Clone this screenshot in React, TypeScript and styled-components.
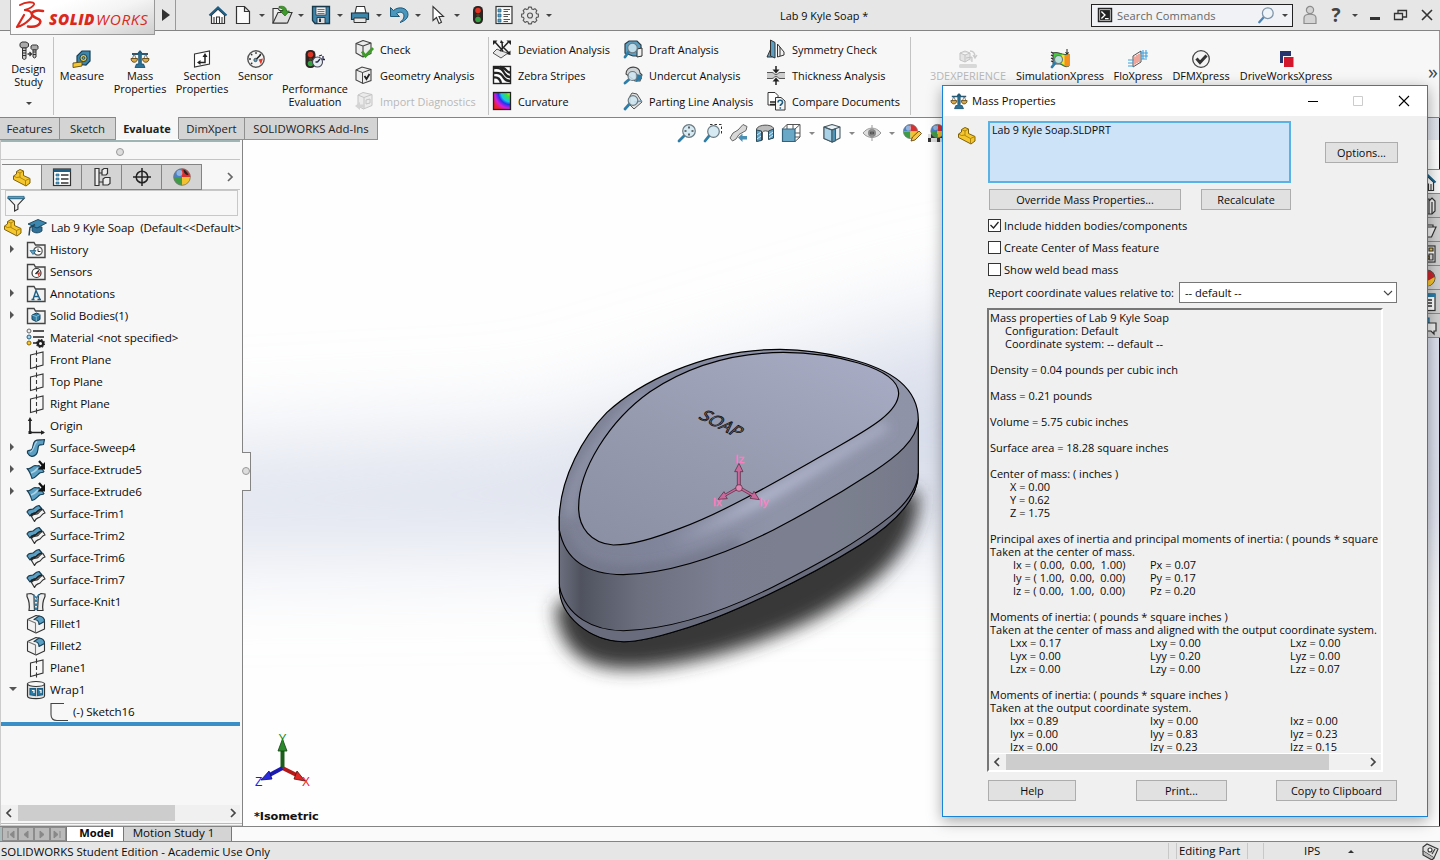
import React from 'react';
import styled, { createGlobalStyle, css } from 'styled-components';

const GlobalStyle = createGlobalStyle`
  * { box-sizing: border-box; }
  html, body { margin: 0; padding: 0; overflow: hidden; }
  body { font-family: 'Open Sans', 'Noto Sans', sans-serif; font-size: 11.1px; color: #0a0a0a; background: #f7f7f7; }
`;

/* ---------- icons ---------- */
const K = '#333';
const B = '#5b9fc3';
const L = '#a9d2e8';
const D = '#1d5f84';
const Y = '#f5c72c';

const FolderBase = () => (
  <path d="M1.500 17.500V2.500h6.500l1.500 2.500h9.500v12.500z" fill="#f2f2f2" stroke="#444" strokeWidth="1.400" />
);
const PartShape = () => (
  <g stroke="#6f5200" strokeWidth=".9" strokeLinejoin="round">
    <path d="M1.500 8l3-2V3.500L8 1.500l3.500 1.500v4.500l6.500 3v4.500L14 18 1.500 11.500z" fill={Y} />
    <path d="M4.500 3.500L8 5l3.500-2M8 5v4.500l5.500 3L18 10.500M13.500 12.500V18M1.500 8l3 1.500L8 9" fill="none" stroke="#a87f0c" />
  </g>
);
const CubeShape = () => (
  <g stroke="#444" strokeWidth="1.100" strokeLinejoin="round">
    <path d="M2 4.500L9 1.500l8 2.500v10.500L9 18l-7-4z" fill="#ececec" />
    <path d="M2 4.500l7 2.500 8-3M9 7v11" fill="none" />
  </g>
);
const LensShape = ({ x = 11, y = 9, r = 5 }: { x?: number; y?: number; r?: number }) => (
  <g>
    <path d={`M${x - r + 1} ${y + r - 1}L2 18`} stroke="#2f7ea8" strokeWidth="2.800" strokeLinecap="round" />
    <circle cx={x} cy={y} r={r} fill="#cfe6f2" fillOpacity=".85" stroke="#6b7a82" strokeWidth="1.200" />
  </g>
);
const BallShape = () => (
  <g>
    <path d="M10 10V1.500A8.500 8.500 0 0 0 1.500 10z" fill="#4a82c8" />
    <path d="M10 10h8.500A8.500 8.500 0 0 0 10 1.500z" fill="#d93030" />
    <path d="M10 10v8.500A8.500 8.500 0 0 1 1.500 10z" fill="#3f9c46" />
    <path d="M10 10v8.500A8.500 8.500 0 0 0 18.500 10z" fill="#f2c230" />
    <circle cx="7.500" cy="6" r="3" fill="#fff" opacity=".4" />
    <circle cx="10" cy="10" r="8.300" fill="none" stroke="#777" strokeWidth=".8" />
  </g>
);
const ScaleShape = () => (
  <g>
    <path d="M8.700 3h2.600v12h2.200l1.500 3.500H5L6.500 15h2.200z" fill="#2d7396" stroke="#174a66" strokeWidth=".8" />
    <path d="M2 5h6l2-2.500L12 5h6" fill="none" stroke="#225a78" strokeWidth="1.800" />
    <path d="M4.200 5L2 10.500h4.500zM15.800 5l-2.300 5.500H18z" fill="none" stroke="#555" strokeWidth=".8" />
    <path d="M1 9.500h6.500c0 5-6.500 5-6.500 0zM12.500 9.500H19c0 5-6.500 5-6.500 0z" fill="#d9a94a" stroke="#5d4512" strokeWidth=".9" />
  </g>
);
const LightShape = () => (
  <g>
    <rect x="5" y="1" width="10" height="18" rx="4.500" fill="#2b2422" />
    <circle cx="10" cy="5.500" r="2.800" fill="#e03323" />
    <circle cx="10" cy="10" r="1.800" fill="#4a3c20" />
    <circle cx="10" cy="14.500" r="2.800" fill="#35a043" />
  </g>
);

const icons: Record<string, React.ReactNode> = {
  home: (
    <g>
      <path d="M3.500 10v8.500h13V10L10 4z" fill="#fff" stroke={K} strokeWidth="1.200" />
      <path d="M8.500 18v-6h3v6M6 18v-6M14 18v-6" fill="none" stroke={K} strokeWidth="1.100" />
      <path d="M1.500 10.500L10 2.500l8.500 8" fill="none" stroke={D} strokeWidth="2.200" />
    </g>
  ),
  file: <path d="M3.500 1.500h8l5 5v12h-13zM11.500 1.500v5h5" fill="#fafafa" stroke={K} strokeWidth="1.200" />,
  open: (
    <g>
      <path d="M1 18V3.500h5l1.500 2H14V18z" fill="#eee" stroke={K} strokeWidth="1.100" />
      <path d="M1 18L6 7.500h14L15.500 18z" fill="#e0e0e0" stroke={K} strokeWidth="1.100" />
      <path d="M7 1.500c5-1 7.500 1 7.500 4.500h3L13 11 8 6h3c0-2-1-3-4-3z" fill="#3f9a2c" stroke="#216a12" strokeWidth=".7" />
    </g>
  ),
  save: (
    <g>
      <path d="M1.500 1.500h17v17H4l-2.500-3z" fill="#3e83a8" stroke="#16394c" strokeWidth="1.300" />
      <rect x="5" y="2" width="10" height="8" fill="#eee" stroke="#234" strokeWidth=".7" />
      <path d="M6.500 4.500h7M6.500 6.500h7M6.500 8.500h7" stroke="#555" strokeWidth=".8" />
      <path d="M6 18.500v-6h8v6z" fill="#ddd" stroke="#234" strokeWidth=".9" />
      <path d="M8 13.500h2V17H8z" fill="#234" />
    </g>
  ),
  print: (
    <g>
      <path d="M5 8l1.500-6.500h8L16 8z" fill="#fff" stroke={K} strokeWidth="1.100" />
      <path d="M1.500 8h17v6.500h-17z" fill="#3f86ab" stroke="#16394c" strokeWidth="1.200" />
      <path d="M4 13h12v4.500H4z" fill="#e8e8e8" stroke={K} strokeWidth="1" />
    </g>
  ),
  undo: (
    <g strokeLinejoin="round">
      <path d="M1.500 2.500v9h9L7.500 8.500c4-2.500 7.500-1 7.500 2.500 0 3-2 4.500-4 6.500 5-1.500 8-4.500 8-8C19 3 10 .500 4.500 5.500z" fill="#4b96bd" stroke="#1d5878" strokeWidth="1" />
    </g>
  ),
  cursor: <path d="M5 1.500v14l3.500-3 2.500 6 2.500-1.200L11 11.500h4.500z" fill="#fff" stroke={K} strokeWidth="1.100" />,
  light: <LightShape />,
  options: (
    <g>
      <rect x="2" y="1.500" width="16" height="17" fill="#fafafa" stroke={K} strokeWidth="1.200" />
      <path d="M4 4h3v3H4zM4 9h3v3H4zM4 14h3v3H4z" fill={B} stroke={D} strokeWidth=".7" />
      <path d="M9.500 4.500H16M9.500 6.500H14M9.500 9.500H16M9.500 11.500H14M9.500 14.500H16M9.500 16.500H14" stroke="#555" />
    </g>
  ),
  gear: (
    <g fill="none" stroke="#555" strokeWidth="1.200" strokeLinejoin="round" transform="translate(.700 .3) scale(.93)">
      <path d="M8.500 2h3l.5 2 1.500.6 1.800-1 2.100 2.100-1 1.800.6 1.500 2 .5v3l-2 .5-.6 1.500 1 1.800-2.100 2.100-1.800-1-1.500.6-.5 2h-3L8 18l-1.500-.6-1.800 1-2.100-2.100 1-1.800L3 13l-2-.5v-3L3 9l.6-1.500-1-1.800 2.100-2.100 1.800 1L8 4z" />
      <circle cx="10" cy="11" r="2.700" />
    </g>
  ),
  bolts: (
    <g stroke={K} strokeWidth="1">
      <path d="M1 2.500L3 1h4l2.500 1.500v3L7 7H3L1 5.500z" fill="#aaa" />
      <path d="M3.500 7h3.500V17.500l-1.700 1-1.800-1zM3 9.500h4M3 12h4M3 14.500h4" fill="#ccc" />
      <path d="M12 5l1.500-1h4L19 5v2.500L17.500 9h-4L12 7.500z" fill="#aaa" />
      <path d="M14 9h3v7l-1.500 1L14 16zM14 11h3M14 13.500h3" fill="#ccc" />
      <path d="M8.500 13h4M10.500 11l2 2-2 2" fill="none" strokeWidth="1.300" />
    </g>
  ),
  measure: (
    <g>
      <path d="M5 15V7l5-5h8v10l-4 4z" fill="#3c86ac" stroke="#173f55" strokeWidth="1.200" />
      <circle cx="11.500" cy="9" r="3.600" fill={Y} stroke="#173f55" />
      <circle cx="11.500" cy="9" r="1.400" fill="#6aa5c0" stroke="#173f55" strokeWidth=".8" />
      <path d="M1 14l9-1v4l-9 1.500z" fill={Y} stroke="#5d4a10" strokeWidth=".9" />
    </g>
  ),
  scale: <ScaleShape />,
  section: (
    <g>
      <path d="M2.500 5L17.500 2v13l-15 3z" fill="#fff" stroke={K} strokeWidth="1.100" />
      <path d="M7 13.500h6V7" fill="none" stroke="#222" strokeWidth="1.500" />
      <path d="M5 13.500l3.500-2.500v5zM13 4l-2.500 4h5z" fill="#222" />
    </g>
  ),
  sensor: (
    <g>
      <circle cx="10" cy="10" r="8.200" fill="#f4f4f4" stroke="#555" strokeWidth="1.400" />
      <path d="M10 3v2M5 5l1.300 1.300M3 10h2M15 5l-1.300 1.300M5 15l1.300-1.300" stroke={K} strokeWidth="1.300" />
      <path d="M17 9.500l-4.500 1 2.500 5z" fill="#e23a2a" />
      <path d="M14.500 6l-4.500 4.500" stroke="#222" strokeWidth="1.600" />
      <circle cx="9.500" cy="11" r="1.700" fill={B} stroke="#222" strokeWidth=".6" />
    </g>
  ),
  perf: (
    <g>
      <g transform="translate(-4.500 0)"><LightShape /></g>
      <circle cx="12.500" cy="13" r="5" fill="#e6eef2" stroke="#445" strokeWidth="1.100" />
      <path d="M12.500 13l2.500-3M12.500 13h-2M14 7l3-1M18 7v3.500h2" stroke="#224" strokeWidth="1.300" fill="none" />
    </g>
  ),
  check: (
    <g>
      <CubeShape />
      <path d="M8 12.500l3.500 4.500 7.500-8" fill="none" stroke="#3c9d25" strokeWidth="2.800" />
    </g>
  ),
  geometry: (
    <g>
      <path d="M2 5l6-3 9 2.500v11L9 18.500 2 15z" fill="#eee" stroke="#444" strokeWidth="1.100" />
      <path d="M2 5l6.500 2.500L17 4.500M8.500 7.500v11" fill="none" stroke="#444" />
      <path d="M10.500 11l2 3 3-5" fill="none" stroke="#222" strokeWidth="1.800" />
    </g>
  ),
  importDiag: (
    <g opacity=".45">
      <path d="M4 4l5-2.500 9 2v11L9.500 18 4 15z" fill="#ddd" stroke="#888" />
      <path d="M4 4l6 2.500 8-3M10 6.500V18M12 9l4-1v4l-4 1z" fill="none" stroke="#888" />
      <path d="M1 15l5-4v2.500h4v3H6V19z" fill="#aaa" />
    </g>
  ),
  deviation: (
    <g>
      <path d="M1 14l4-4 4 2 7 2-7 5z" fill="#e8e8e8" stroke="#555" />
      <path d="M3 3l8 9M16.500 3L8 12M10 3l.5 7M12 9l5 5" stroke="#222" strokeWidth="1.500" />
      <path d="M1 1.500h4.500L1 6zM19 1.500h-4.500L19 6zM18.500 16v-4.500L14.500 15zM9 1l3 3H8z" fill="#222" />
    </g>
  ),
  zebra: (
    <g>
      <rect x="1.500" y="1.500" width="17" height="17" fill="#fff" stroke="#222" strokeWidth="1.400" />
      <path d="M2 8c6-1 8 2 10 5s4 3 6 3M2 3c8-1 9 3 11 6s4 3 5 3M8 2c4 0 6 3 7 4s2 1.500 3 1.500M2 12.500c4-.5 6 1.500 7 5.500" fill="none" stroke="#222" strokeWidth="2.300" />
    </g>
  ),
  curvature: (
    <g>
      <defs>
        <radialGradient id="rainbow" cx="1" cy="0" r="1.300">
          <stop offset="0" stopColor="#f7ef20" /><stop offset=".2" stopColor="#3fe03a" />
          <stop offset=".42" stopColor="#15c6e8" /><stop offset=".55" stopColor="#2433ee" />
          <stop offset=".72" stopColor="#d41de0" /><stop offset=".9" stopColor="#f0202a" />
        </radialGradient>
      </defs>
      <rect x="1.500" y="1.500" width="17" height="17" fill="url(#rainbow)" stroke="#222" strokeWidth="1.300" />
    </g>
  ),
  draft: (
    <g>
      <path d="M2 5l4-3h8l4 4v11h-8l-8-3z" fill={B} stroke="#2b3f4a" strokeWidth="1.200" />
      <path d="M14 10l5-1v8l-5 1z" fill="#f0f0f0" stroke={K} />
      <LensShape x={9.5} y={9} r={4.800} />
    </g>
  ),
  undercut: (
    <g>
      <path d="M3 9c0-9 14-9 14-1l2 2-2 6h-5z" fill="#d0d5d8" stroke="#444" strokeWidth="1.100" />
      <path d="M12 9l7 1v4l-6 3z" fill="#2d7ca6" />
      <LensShape x={9.5} y={11} r={4.500} />
    </g>
  ),
  parting: (
    <g>
      <path d="M9 2l5 1 5 8-8 7-4-4V5z" fill="#e2e2e2" stroke="#555" />
      <path d="M11 11l8-1" stroke={B} strokeWidth="1.600" />
      <LensShape x={10} y={9.5} r={4.800} />
    </g>
  ),
  symmetry: (
    <g stroke={K} strokeWidth="1" strokeLinejoin="round">
      <path d="M6.500 6v12H1z" fill={B} />
      <path d="M4.500 1L9 3.500V19l-4.500-2z" fill={B} />
      <path d="M11.500 5l6.500 8v3l-6.500 2z" fill="#f2f2f2" />
      <path d="M11.500 5v13M14 8v9" fill="none" />
    </g>
  ),
  thickness: (
    <g>
      <path d="M1 7.500h5c2 0 2 2 4 2s2-2 4-2h5v6h-5c-2 0-2-2-4-2s-2 2-4 2H1z" fill="#ccc" />
      <path d="M1 7.500h5c2 0 2 2 4 2s2-2 4-2h5M1 13.500h5c2 0 2-2 4-2s2 2 4 2h5" fill="none" stroke="#555" />
      <path d="M10 1v4M10 20v-4" stroke="#222" strokeWidth="1.500" />
      <path d="M6.500 4.500h7L10 8.500zM6.500 16.500h7L10 12.500z" fill="#222" />
    </g>
  ),
  compare: (
    <g>
      <path d="M2 1.500h7l3 3V14H2z" fill="#fff" stroke={K} />
      <path d="M9.500 6.500H15l4 3.500v9H9.500z" fill="#f5f5f5" stroke={K} />
      <path d="M4 11h6M4 13.500h6" stroke="#222" strokeWidth="1.500" />
      <path d="M12 11.500c0-3 4.500-3 4.500 0 0 2-2.200 1.500-2.200 3.500M14.300 16.300v1.500" fill="none" stroke={D} strokeWidth="1.600" />
    </g>
  ),
  exp3d: (
    <g opacity=".4">
      <path d="M2 4l5-2 5 2v6l-5 3-5-2zM2 4l5 2 5-2M7 6v7M8 9l6-1v5" fill="#ccc" stroke="#777" />
      <path d="M12 2c4 0 5 2 5 6M15 6l2 3 2-3" fill="none" stroke="#888" strokeWidth="1.300" />
      <rect x="1" y="15" width="18" height="4" rx="1.500" fill="#aaa" />
    </g>
  ),
  simx: (
    <g>
      <path d="M1 3l4 2M1 6l4 2M1 9l4 2M1 12l3 1" stroke="#222" strokeWidth="1.200" />
      <path d="M3 4c6-2 9 3 16 1v12c-4 2-6-1-9-2H3z" fill="#46c83f" stroke="#222" strokeWidth=".8" />
      <path d="M14 6c2 0 3 0 5-1v12c-2 1-4 0-5-1z" fill="#f5901e" />
      <path d="M11.500 5.500l3 .5v10l-3-1.500z" fill="#f3e42a" />
      <path d="M17 0v5M15.500 3L17 5l1.500-2" stroke="#222" fill="none" />
      <LensShape x={8.500} y={10.500} r={4} />
    </g>
  ),
  flo: (
    <g fill="none">
      <path d="M5 7l8-5v11l-8 5z" fill="#fbe9e6" stroke="#555" />
      <path d="M7 7.500v8M9 6v8M11 5v8" stroke="#e5634f" />
      <path d="M0 11h6M0 14h5M0 17h6M12 4h8M13 7h7M13 10h6M15 1v9M18 1v8" stroke="#3fa0dc" strokeWidth="1.100" />
    </g>
  ),
  dfm: (
    <g fill="none">
      <circle cx="10" cy="10" r="8.300" fill="#f4f4f4" stroke="#444" strokeWidth="1.300" />
      <path d="M5.500 9.500l3.500 4 6.500-7" stroke="#333" strokeWidth="3" />
    </g>
  ),
  drive: (
    <g>
      <rect x="4" y="2" width="11" height="12" fill="#27336d" />
      <rect x="7.500" y="7.500" width="10.500" height="11" fill="#d3162c" stroke="#f7f7f7" />
    </g>
  ),
  part: <PartShape />,
  propTab: (
    <g>
      <rect x="1.500" y="2" width="17" height="16.500" fill="#fff" stroke={K} strokeWidth="1.200" />
      <path d="M1.500 2h17v3h-17z" fill={D} />
      <path d="M4 7h3v2H4zM4 11h3v2H4zM4 15h3v2H4z" fill={B} stroke={D} strokeWidth=".6" />
      <path d="M9 8h7.500M9 12h7.500M9 16h7.500" stroke={K} strokeWidth="1.300" />
    </g>
  ),
  configTab: (
    <g fill="#eee" stroke={K} strokeWidth="1.200">
      <path d="M3 1.500h4v17H3zM7 6h4M7 15h4" />
      <path d="M10 3l2-1.500h3.500v5L14 8h-4zM11 12l2-1.500h5v6L16 18h-5z" />
    </g>
  ),
  target: (
    <g fill="none" stroke="#222" strokeWidth="1.500">
      <circle cx="10" cy="10" r="5.800" /><path d="M10 1v18M1 10h18" />
    </g>
  ),
  ballTab: <g><BallShape /><path d="M11.500 2.500c2 1 3.500 2.500 5 5.500-3 0-5-2-5-5.500z" fill="#222" /></g>,
  filter: (
    <g>
      <path d="M1.500 4.500L8 11.500V18l3.500-2v-4.500L18 4.500z" fill="#f4f4f4" stroke={K} strokeWidth="1.200" />
      <path d="M1 2.500h17v2.500H1z" fill={B} stroke={D} strokeWidth=".8" />
    </g>
  ),
  grad: (
    <g>
      <path d="M5 8v5c3 3 8 2 10 0V9z" fill="#2f7198" stroke="#153f56" strokeWidth=".8" />
      <path d="M1 6l10-4.500 8.500 3.500L10 10z" fill="#3b87b0" stroke="#153f56" strokeWidth=".9" />
      <path d="M8 6.500l-5 3-1 8" fill="none" stroke="#27465a" strokeWidth="1.500" />
    </g>
  ),
  history: (
    <g>
      <FolderBase />
      <circle cx="12" cy="11" r="4.200" fill="#fff" stroke="#555" strokeWidth="1.200" />
      <path d="M12 8.500v3h2.500" fill="none" stroke={K} />
      <path d="M4 10.500h6L7 14.500z" fill={B} stroke={D} strokeWidth=".7" />
    </g>
  ),
  sensors: (
    <g>
      <FolderBase />
      <circle cx="10.500" cy="11" r="4.500" fill="#fff" stroke={K} strokeWidth="1.200" />
      <path d="M14.500 10l-3.500 1 1.700 3.500z" fill="#e23a2a" /><path d="M13 8.500L9.500 12" stroke="#222" strokeWidth="1.500" />
    </g>
  ),
  annotations: (
    <g>
      <FolderBase />
      <path d="M5.500 15.500h3M11.500 15.500h3.500M7 15.500l3-9 4 9M8 12.500h4.700" fill="none" stroke={D} strokeWidth="1.400" />
    </g>
  ),
  bodies: (
    <g>
      <FolderBase />
      <path d="M6 9l4.500-2L14 8.500v5l-3.800 2L6 13.500z" fill="#2d7ca6" stroke="#153f56" /><path d="M6 9l4.300 1.500L14 8.500M10.300 10.500v5" fill="none" stroke="#9cd" strokeWidth=".8" />
    </g>
  ),
  material: (
    <g>
      <circle cx="3" cy="3" r="2" fill="#eee" stroke="#666" /><circle cx="3" cy="9" r="2" fill={L} stroke={D} /><circle cx="3" cy="15" r="2" fill={Y} stroke="#8a6500" />
      <path d="M7 3h11M7 9h11M7 15h4" stroke="#222" strokeWidth="1.700" />
      <circle cx="14.500" cy="15.500" r="2.600" fill="none" stroke="#222" strokeWidth="2.200" />
      <circle cx="14.500" cy="15.500" r="4" fill="none" stroke="#222" strokeWidth="1.100" strokeDasharray="1.600 1.540" />
    </g>
  ),
  plane: (
    <g fill="none" stroke={K} strokeWidth="1.100">
      <path d="M4.500 5L17 2v13L4.500 18.500zM10.500 .5v5M10.500 8v4M10.500 14.500v5" />
    </g>
  ),
  origin: (
    <g fill="none" stroke="#222" strokeWidth="1.700">
      <path d="M4 3v13.500h14" /><path d="M1.800 5L4 1l2.200 4zM15 14.300l4 2.200-4 2.200z" fill="#222" stroke="none" /><path d="M2.500 15h3v3h-3z" fill="#222" stroke="none" />
    </g>
  ),
  sweep: (
    <g strokeLinejoin="round">
      <path d="M1.500 13c2-1 3 0 4.500-2s.5-6 3-8c3-2 5-.5 9.500-1.500l-1 5c-3 1-4.500-.5-5 1.500-1 3 0 6-2.500 8.500-2.500 2.500-6 3-8.500-1.500z" fill={B} stroke="#173f55" strokeWidth="1.200" />
      <path d="M4 14c4-.5 3.500-8 7-10.500" fill="none" stroke={L} strokeWidth="1.300" />
    </g>
  ),
  extrude: (
    <g strokeLinejoin="round">
      <path d="M1 8.500C4 10 6 6 9 5.500c2 0 3 1 4 0l5 6c-1 2-3 0-5 2s-3 4-7 5c-1-3-2-7-5-10z" fill={B} stroke="#173f55" strokeWidth="1.100" />
      <path d="M5 13c4-1 5-3 7-5" stroke={L} strokeWidth="1.800" fill="none" />
      <path d="M13 1l4 4.500" stroke="#111" strokeWidth="2.200" /><path d="M19 2v7.500h-7.500z" fill="#111" />
    </g>
  ),
  trim: (
    <g strokeLinejoin="round">
      <path d="M5.500 12.500C8 9 10 11 12 9.500 14 8 14 6 17 5.500L19 9c-3 .5-3 2.500-5 4-3 1.500-4 .5-5.500 4.500z" fill="#f4f4f4" stroke={K} strokeWidth="1.200" />
      <path d="M1 8C3 4 5 6 7 5s2-3 6-3.500L16 5c-4 .5-4 2-6 3.500C8 10 6 8 4 12z" fill={B} stroke="#173f55" strokeWidth="1.200" />
      <path d="M4.500 12c2-3.500 4-2 6-3.500s2-3 5.500-3.500" fill="none" stroke="#222" strokeWidth="1.600" />
    </g>
  ),
  knit: (
    <g>
      <path d="M1 2l4-.5L8 3c0 6 0 8 .5 15.500H3c1-6 0-10-2-14zM19 2l-4-.5L12.500 3c-.5 6-.5 8-1 15.500H17c-1-6 0-10 2-14z" fill="#eee" stroke={K} strokeWidth="1.200" />
      <path d="M7 2.500l4 4M13 2.500l-3 4M8.500 7.500l3 2.500M11.500 7.500l-3 2.500M8.500 11.500l3 2.500M11.500 11.500l-3 2.500M8.500 15.500l3 2.500M11.500 15.500l-3 2.500" stroke="#2d7ca6" strokeWidth="1.400" />
    </g>
  ),
  fillet: (
    <g stroke={K} strokeWidth="1.100" strokeLinejoin="round">
      <path d="M1.500 5.500L10 1.500l5 1c2.500 1 3.500 3 3.500 5V15L10 19l-8.500-4z" fill="#f2f2f2" />
      <path d="M1.500 5.500L9.500 9v9.500" fill="none" stroke="#777" />
      <path d="M8 5.500l5-3.500c3.500.5 5.500 2 5.500 5.500L13 10.500c0-3-1.500-5-5-5z" fill={B} stroke="#173f55" />
    </g>
  ),
  wrap: (
    <g stroke={K} strokeWidth="1.200">
      <path d="M1.500 4v12c0 3.500 17 3.500 17 0V4z" fill="#e2e2e2" /><ellipse cx="10" cy="4" rx="8.500" ry="2.500" fill="#f8f8f8" />
      <path d="M4 8.500h5.500v7L4 14.800zM11.500 8.500h5v6.300l-5 .7z" fill="#2d7ca6" stroke={D} /><path d="M6 10.500h2v2.500M13.500 10.500h1.500v2.500" fill="none" stroke="#fff" />
    </g>
  ),
  sketch: <path d="M19 18.500H8c-4 0-6-2-6-6V1.500h13" fill="none" stroke="#444" strokeWidth="1.100" />,
  zoomFit: (
    <g>
      <LensShape x={12} y={8} r={6.300} />
      <path d="M12 3.500v2M12 10.500v2M7.500 8h2M14.500 8h2" stroke="#444" strokeWidth="1.600" />
    </g>
  ),
  zoomArea: (
    <g>
      <path d="M7 1.500h11.500v11" fill="none" stroke={K} strokeDasharray="2.500 2" />
      <LensShape x={10.5} y={8.500} r={5.800} />
    </g>
  ),
  prevView: (
    <g strokeLinejoin="round">
      <path d="M1 15l3-5 5-3 5-5.500 4 2-1 4-7 4-3 4.500-3.500 2z" fill="#d8d8d8" stroke="#666" />
      <path d="M9 14.500l4.500-4V13H18v3.500h-4.500V19z" fill="#4b8fb3" />
    </g>
  ),
  sectionView: (
    <g>
      <path d="M1.500 6c2-5 15-5 17-1v10l-5 1V9c-1-1.500-5-1.500-6 0v8l-6 1z" fill="#bbb" stroke="#555" />
      <path d="M1.500 7l5 1v9.500l-5 1zM13.500 8l5-2v9l-5 1.500z" fill="#5b9fc3" stroke="#2b4a5a" /><path d="M2 12l4-3M2 16l4-3M14 12l4-3M14 15l4-3" stroke="#d4ebf7" />
    </g>
  ),
  orient: (
    <g fill="none" stroke="#555">
      <path d="M6 6V1.500h13V14h-5M6 1.500L1.500 6M19 1.500L14 6M19 14l-5 4.500M12 1.500V6M14 10h5" />
      <path d="M1.500 6H14v12.500H1.500z" fill="#6aa8c8" stroke="#33627c" strokeWidth="1.200" />
    </g>
  ),
  shaded: (
    <g stroke="#4a5a62" strokeWidth="1.100" strokeLinejoin="round">
      <path d="M2 4l8-2.500L18 4v11l-7.500 4L2 15.500z" fill="#e8f2f7" />
      <path d="M2 4l8 3v12L2 15.500z" fill="#a9d2e8" /><path d="M10 7l3.500-1.300v12L10 19z" fill="#4d96bc" /><path d="M2 4l8 3 8-3" fill="none" />
    </g>
  ),
  eye: (
    <g>
      <path d="M1 10c5-6.500 13-6.500 18 0-5 6-13 6-18 0z" fill="#ddd" stroke="#999" />
      <circle cx="10" cy="10" r="4" fill="#888" /><circle cx="10" cy="10" r="1.800" fill="#333" /><path d="M10 2v16" stroke="#999" />
    </g>
  ),
  appearance: (
    <g>
      <g transform="scale(.85)"><BallShape /></g>
      <path d="M9 18l1.500-4L17 8l2.500 2.500-6.500 6.500z" fill="#f5c64a" stroke="#6a4a10" strokeWidth=".9" />
    </g>
  ),
  scene: (
    <g>
      <path d="M1 11h18v8H1z" fill="#333" /><path d="M1 11h3v4H1zM7 15h3v4H7zM4 19h3v-4H4zM13 15h3v4h-3z" fill="#ddd" />
      <g transform="translate(2.500 0) scale(.8)"><BallShape /></g>
    </g>
  ),
  library: <g stroke={K} fill="#eee" strokeWidth="1.200"><path d="M3 4l3-2v15l-3 1zM8 3h4v15H8zM12 5l3-3 3 3v10l-3 3h-3z" /><path d="M15 6v12" /></g>,
  folder: <g stroke={K} fill="#eee" strokeWidth="1.200"><path d="M2 17V3h6l2 2h6v3" /><path d="M2 17L6 7h13l-4.500 10z" /></g>,
  palette: (
    <g stroke={K} strokeWidth="1.200">
      <rect x="2" y="2" width="16" height="16" fill="#fff" /><path d="M4 4h5v5H4zM12 10h4v6h-4zM4 12h5v4H4z" fill="#ddd" /><path d="M12 4h4v3h-4zM10 12h2v3h-2z" fill={Y} />
    </g>
  ),
  appBall: <g><circle cx="10" cy="10" r="8" fill="#c9272d" stroke="#555" /><path d="M3 12c4 3 10 0 14.500-3 1 4-3 9-7.500 9-4 0-6-3-7-6z" fill={Y} /></g>,
  listPane: <g><rect x="2" y="2" width="16" height="16.500" fill="#fff" stroke={K} strokeWidth="1.200" /><path d="M2 2h16v3H2z" fill="#2d7ca6" /><path d="M5 8h10M5 11h10M5 14h10" stroke={K} strokeWidth="1.300" /></g>,
  forum: <g strokeWidth="1.200"><path d="M1 2h11v8H8l-3 3v-3H1z" fill={B} stroke={D} /><path d="M6 7h13v8h-2v3l-3-3H6z" fill="#eee" stroke={K} /></g>,
  user: <g fill="#d4d4d4" stroke="#8c8c8c" strokeWidth="1.200"><circle cx="10" cy="5" r="3.600" /><path d="M4 18.500V13c0-5 12-5 12 0v5.500z" /></g>,
  search: (
    <g fill="none">
      <path d="M7.500 12.500L2.500 18" stroke="#4c86b8" strokeWidth="2.600" strokeLinecap="round" /><circle cx="12" cy="8" r="6" fill="#eef4f8" stroke="#7f94a8" strokeWidth="1.400" />
    </g>
  ),
  prompt: <g><rect x="2.500" y="2.500" width="15" height="15" fill="#333" stroke="#111" /><path d="M4 4h12v12H4z" fill="#222" stroke="#eee" strokeWidth=".8" /><path d="M6 6l4 4-4 4M10 14h4" fill="none" stroke="#fff" strokeWidth="1.500" /></g>,
  tag: <g stroke={K} strokeWidth="1.100"><path d="M3 6l4-3 11 5-4 9L3 10z" fill="#ddd" /><path d="M3 10v4l9 5 2-2" fill="#bbb" /><circle cx="10" cy="9" r="2" fill="#fff" /><path d="M12 13l3-5" /></g>,
};

const Svg = styled.svg`display: block; flex: none; overflow: visible;`;
const Icon = ({ name, size = 20 }: { name: string; size?: number }) => (
  <Svg width={size} height={size} viewBox="0 0 20 20">{icons[name]}</Svg>
);

/* ---------- frame ---------- */
const Window = styled.div`
  position: relative; width: 1440px; height: 860px; overflow: hidden;
  display: flex; flex-direction: column; background: #f7f7f7;
`;
const TitleBar = styled.header`
  flex: none; height: 31px; display: flex; align-items: center; background: #e6e6e6;
  border-bottom: 1px solid #848484; position: relative; z-index: 2;
`;
const LogoBox = styled.div`
  align-self: flex-start; flex: none; width: 145px; height: 35px; margin-left: 10px;
  border: 1px solid #999; border-top: 0; background: linear-gradient(160deg, #fff 25%, #f4f4f4 55%, #cfcfcf);
  display: flex; align-items: center; padding: 0 0 0 5px;
`;
const LogoText = styled.span`
  font-family: 'Open Sans', sans-serif; font-style: italic; font-weight: 800; font-size: 15.300px;
  color: #da291c; margin: 4px 0 0 4px; white-space: nowrap; line-height: 20px; letter-spacing: .5px;
  b { font-weight: 400; letter-spacing: .65px; margin-left: 1px; }
`;
const LogoArrow = styled.div`
  width: 21px; height: 30px; flex: none; border-right: 1px solid #999; display: flex; align-items: center; padding-left: 7px;
  &::before { content: ''; border-left: 8px solid #333; border-top: 6.500px solid transparent; border-bottom: 6.500px solid transparent; }
`;
const Quick = styled.div`display: flex; flex: none; align-items: center; padding-left: 29px; height: 30px;`;
const Slot = styled.span<{ $w: number; $top?: number }>`
  width: ${p => p.$w}px; flex: none; display: flex; justify-content: center; align-items: center; margin-top: ${p => p.$top || 0}px;
`;
const Caret = styled.i<{ $up?: boolean; $c?: string }>`
  display: block; flex: none; border: 3px solid transparent;
  ${p => p.$up
    ? css`border-bottom-color: ${p.$c || '#333'}; border-top: 0;`
    : css`border-top-color: ${p.$c || '#444'}; border-bottom: 0;`}
`;
const DocTitle = styled.div`margin-left: 226px; width: 96px; flex: none; font-size: 10.900px; white-space: nowrap;`;
const SearchBox = styled.div`
  margin-left: 215px; width: 202px; height: 23px; border: 1px solid #222; background: #f0f2f5; flex: none;
  display: flex; align-items: center; padding: 0 1px 0 4px; color: #666; font-size: 11.100px; white-space: nowrap;
  span { padding-left: 3px; letter-spacing: .1px; }
`;
const Grow = styled.b`flex: 1; font-weight: 400;`;
const SysButtons = styled.div`
  flex: 1; display: flex; align-items: center; padding-left: 7px; color: #333;
  strong { font: 700 19px/24px 'Open Sans', sans-serif; width: 24px; text-align: center; color: #444; margin-left: 4px; }
`;

const Ribbon = styled.div`
  flex: none; height: 87px; display: flex; background: #f7f7f7; border-bottom: 1px solid #848484; border-right: 1px solid #999; padding-top: 6px; position: relative;
`;
const Separator = styled.i`width: 1px; height: 78px; background: #c3c3c3; flex: none;`;
const BigButton = styled.div<{ $w: number; $pad: number; $off?: boolean; $ml?: number; $gap?: number }>`
  width: ${p => p.$w}px; margin-left: ${p => p.$ml || 0}px; padding-top: ${p => p.$pad}px; flex: none;
  display: flex; flex-direction: column; align-items: center; text-align: center;
  line-height: 13px; white-space: pre; font-size: 10.900px; color: ${p => (p.$off ? '#b8b8b8' : '#0a0a0a')};
  svg { margin-bottom: ${p => p.$gap ?? 0}px; }
`;
const CommandList = styled.div<{ $w: number; $ml: number }>`
  width: ${p => p.$w}px; padding-left: ${p => p.$ml}px; flex: none; display: flex; flex-direction: column; margin-top: -1px;
`;
const Command = styled.div<{ $off?: boolean }>`
  height: 26px; display: flex; align-items: center; gap: 6px; white-space: nowrap; font-size: 10.900px;
  color: ${p => (p.$off ? '#b8b8b8' : '#0a0a0a')};
`;
const More = styled.div`position: absolute; right: 1px; top: 31px; font-size: 20px; line-height: 20px; color: #444;`;

const TabBar = styled.div`
  flex: none; height: 22px; display: flex; background: linear-gradient(to right, #fefefe 78%, #dfe3ec); position: relative; z-index: 1; border-right: 1px solid #111;
`;
const Tab = styled.div<{ $w: number; $active?: boolean }>`
  width: ${p => p.$w}px; height: 22px; line-height: 22px; flex: none; text-align: center; font-size: 11.400px; color: #222;
  background: ${p => (p.$active ? '#f7f7f7' : '#d4d4d4')}; margin-top: ${p => (p.$active ? '-1px' : 0)}; border-right: 1px solid #909090;
  ${p => (p.$active ? css`font-weight: 700; font-size: 11px; padding-top: 1px;` : css`border-bottom: 1px solid #909090;`)}
`;
const ViewTools = styled.div`display: flex; align-items: center; height: 30px; margin-left: 296px;`;

/* ---------- left panel ---------- */
const Main = styled.div`flex: none; height: 686px; display: flex; position: relative;`;
const SidePanel = styled.aside`
  width: 243px; flex: none; background: #f7f7f7; border-right: 1px solid #848484; border-left: 1px solid #ccc;
  display: flex; flex-direction: column;
`;
const Grip = styled.div`
  height: 20px; margin-right: 2px; border-top: 2px solid #9fb5b5; border-bottom: 1px solid #c4c4c4; display: flex; align-items: center; justify-content: center; padding: 3px 2px 0 0;
  &::before { content: ''; width: 6px; height: 6px; border-radius: 50%; border: 1px solid #999; background: #ddd; }
`;
const PanelTabs = styled.div`margin: 4px 2px 0 0; display: flex; padding-left: 1px; border-bottom: 1px solid #c4c4c4; height: 26px;`;
const PanelTab = styled.div<{ $active?: boolean }>`
  width: 40px; height: 26px; display: flex; align-items: center; justify-content: center; border-top: 1px solid #848484;
  ${p => !p.$active && css`background: #d4d4d4; border-right: 1px solid #848484; border-bottom: 1px solid #848484;`}
  &:first-child { border-right: 1px solid #848484; }
`;
const PanelNext = styled.div`
  flex: 1; display: flex; align-items: center; justify-content: flex-end; padding-right: 6px;
`;
const FilterBox = styled.div`
  height: 26px; width: 233px; margin-left: 4px; border: 1px solid #c8c8c8; display: flex; align-items: center; padding-left: 1px;
`;
const Tree = styled.div`display: flex; flex-direction: column; padding-top: 1px; height: 506px; overflow: hidden;`;
const TreeRow = styled.div<{ $indent: number }>`
  height: 22px; flex: none; display: flex; align-items: center; white-space: pre; font-size: 11.650px; letter-spacing: -.1px;
  padding-left: ${p => p.$indent}px;
`;
const Expander = styled.i<{ $state: 'none' | 'closed' | 'open' }>`
  width: 17px; flex: none; margin-left: 8px; display: flex; padding-bottom: 3px;
  ${p => p.$state === 'closed' && css`&::before { content: ''; margin-left: 1px; border: 4px solid transparent; border-left-color: #555; border-right: 0; }`}
  ${p => p.$state === 'open' && css`&::before { content: ''; border: 4px solid transparent; border-top-color: #555; border-bottom: 0; }`}
`;
const TreeLabel = styled.span`padding: 0 0 1px 4px;`;
const Rollback = styled.i`height: 4px; background: #3a8fc7; flex: none; margin-right: 2px;`;
const PanelScroll = styled.div`
  height: 16px; margin: 79px 2px 0 0; background: #f0f0f0; display: flex; align-items: center; padding: 0 3px 0 4px;
`;
const PanelEdge = styled.i`height: 3px; margin: 2px 0 0; border-top: 1px solid #bbb; border-bottom: 1px solid #ccc;`;
const Thumb = styled.i<{ $w: number }>`width: ${p => p.$w}px; height: 100%; background: #cdcdcd; flex: none;`;

const Viewport = styled.section`flex: 1; position: relative; overflow: hidden; background: #fefefe; border-right: 1px solid #111;`;
const Splitter = styled.div`
  position: absolute; left: 242px; top: 312px; width: 9px; height: 39px; background: #f7f7f7; border: 1px solid #848484; border-left: 0;
  display: flex; align-items: center; justify-content: flex-start; padding-bottom: 2px;
  &::before { content: ''; width: 6px; height: 6px; border-radius: 50%; border: 1px solid #999; background: #ddd; }
`;
const ViewName = styled.div`
  position: absolute; left: 11px; bottom: 1px; font: 700 11.300px/16px 'DejaVu Sans', sans-serif; letter-spacing: -.1px; color: #111;
`;
const Dock = styled.div`position: absolute; right: 0; top: 29px; width: 27px; border: 1px solid #888; border-right: 0; background: #ccc;`;
const DockTab = styled.div<{ $active?: boolean }>`
  height: 24px; display: flex; align-items: center; justify-content: flex-start; padding-left: 3px; border-bottom: 1px solid #888;
  background: ${p => (p.$active ? '#f7f7f7' : '#cfcfcf')};
  &:last-child { border-bottom: 0; height: 23px; }
`;

/* ---------- bottom ---------- */
const ModelTabs = styled.div`
  flex: none; height: 16px; display: flex; border-top: 1px solid #848484; border-bottom: 1px solid #848484; background: #fafafa;
`;
const NavKeys = styled.div`width: 67px; padding-left: 2px; display: flex; background: #aabbbb; border-right: 1px solid #777;`;
const NavKey = styled.i`
  width: 16px; background: #b9b9b9; border: 1px solid #8c8c8c; display: flex; align-items: center; justify-content: center;
`;
const ModelTab = styled.div<{ $w: number; $active?: boolean }>`
  width: ${p => p.$w}px; text-align: center; line-height: 12px; font-size: 11.600px; border-right: 1px solid #777;
  ${p => (p.$active ? css`background: #fff; font-weight: 700; font-size: 11.200px; padding-left: 3px;` : css`background: #d4d4d4; padding-right: 8px;`)}
`;
const StatusBar = styled.footer`
  flex: none; height: 18px; background: #e6e6e6; display: flex; align-items: center; font-size: 11.450px; padding-left: 1px; white-space: nowrap;
`;
const StatusCell = styled.span<{ $w: number; $pl: number }>`
  width: ${p => p.$w}px; padding-left: ${p => p.$pl}px; border-left: 1px solid #c8c8c8; height: 16px; line-height: 16px; flex: none; display: flex; align-items: center;
`;

/* ---------- dialog ---------- */
const Dialog = styled.div`
  position: absolute; z-index: 5; left: 942px; top: 85px; width: 486px; height: 732px; border: 1px solid #1883d7; background: #f0f0f0;
  box-shadow: 0 4px 14px rgba(0, 0, 0, .35); display: flex; flex-direction: column;
`;
const DialogTitle = styled.div`
  height: 30px; flex: none; background: #fff; display: flex; align-items: center; padding: 0 0 1px 7px; font-size: 11.150px;
  span { padding: 0 0 1px 4px; flex: 1; }
`;
const Row = styled.div<{ $h: number; $mt?: number; $pl?: number }>`
  height: ${p => p.$h}px; margin-top: ${p => p.$mt || 0}px; padding-left: ${p => p.$pl ?? 45}px; flex: none; display: flex; align-items: center; white-space: nowrap;
`;
const FileIcon = styled.span`align-self: flex-start; padding-top: 5px; width: 20px;`;
const Selection = styled.div`
  width: 303px; height: 62px; border: 2px solid #5ab1e4; background: #cde3f8; padding: 0 2px; line-height: 14px; font-size: 10.700px; margin-left: 11px;
`;
const Button = styled.button<{ $w: number; $ml?: number }>`
  width: ${p => p.$w}px; margin-left: ${p => p.$ml || 0}px; height: 21px; flex: none; padding: 0; border: 1px solid #adadad; background: #e1e1e1;
  font: 10.900px/17px 'Open Sans', sans-serif; color: #0a0a0a;
`;
const Caption = styled.span<{ $w?: number }>`padding-bottom: 1px; flex: none; font-size: 11.100px; width: ${p => (p.$w ? `${p.$w}px` : 'auto')}; letter-spacing: ${p => (p.$w ? '-.03px' : 0)};`;
const Box = styled.i`
  width: 13px; height: 13px; border: 1px solid #333; background: #fff; margin: -1px 3px 0 0; flex: none; display: flex; align-items: center; justify-content: center;
`;
const Select = styled.div`
  width: 218px; height: 21px; border: 1px solid #777; background: #fff; display: flex; align-items: center; justify-content: space-between; padding: 0 4px 0 5px;
`;
const Report = styled.div`
  width: 396px; height: 464px; margin: 5px 0 0 44px; flex: none; border: 2px solid;
  border-color: #777 #fff #fff #777; display: flex; flex-direction: column; overflow: hidden;
`;
const ReportText = styled.div`flex: 1; padding: 1px 0 0 1px; font-size: 11px; line-height: 13px; white-space: pre; overflow: hidden;`;
const Line = styled.div<{ $indent?: number }>`height: 13px; padding-left: ${p => p.$indent || 0}px; display: flex;`;
const Cell = styled.span<{ $w?: number }>`flex: none; width: ${p => (p.$w ? `${p.$w}px` : 'auto')};`;
const ReportScroll = styled.div`height: 17px; flex: none; background: #f0f0f0; border-top: 1px solid #fff; display: flex; align-items: center; padding: 0 4px 0 4px;`;

const Chevron = ({ dir, c = '#444' }: { dir: 'left' | 'right' | 'down'; c?: string }) => (
  <Svg width="8" height="10" viewBox="0 0 8 10">
    <path d={dir === 'left' ? 'M6 1L2 5l4 4' : dir === 'right' ? 'M2 1l4 4-4 4' : 'M0 3l4 4 4-4'} fill="none" stroke={c} strokeWidth={dir === 'down' ? 1.1 : 1.7} />
  </Svg>
);

/* ---------- 3D scene ---------- */
const RIM = 'M58 560C62 440 130 320 200 248C290 165 480 58 720 58C850 60 1010 95 1080 155C1115 185 1135 220 1135 270C1130 330 1070 380 1000 425C900 490 800 548 700 600C560 670 400 730 250 734C140 733 75 690 58 600Z';
const Scene = () => (
  <Svg width="1197" height="686" viewBox="0 0 1197 686">
    <defs>
      <filter id="haze" x="-20%" y="-60%" width="140%" height="220%"><feGaussianBlur stdDeviation="50" /></filter>
      <filter id="soft" x="-20%" y="-20%" width="140%" height="140%"><feGaussianBlur stdDeviation="27" /></filter>
      <filter id="sheen" x="-20%" y="-40%" width="140%" height="180%"><feGaussianBlur stdDeviation="16" /></filter>
      <linearGradient id="top" x1="0" y1="1" x2=".8" y2="0">
        <stop offset="0" stopColor="#8b8fa3" /><stop offset=".5" stopColor="#979bb0" /><stop offset="1" stopColor="#a6aac2" />
      </linearGradient>
      <linearGradient id="side" x1="0" x2="1">
        <stop offset="0" stopColor="#6c6f7e" /><stop offset=".06" stopColor="#50535f" /><stop offset=".22" stopColor="#6c6f7e" />
        <stop offset=".45" stopColor="#7b7e90" /><stop offset=".8" stopColor="#7b808f" /><stop offset="1" stopColor="#757888" />
      </linearGradient>
      <linearGradient id="rim" x1="0" x2="1">
        <stop offset="0" stopColor="#7d8194" /><stop offset=".25" stopColor="#80849a" /><stop offset=".6" stopColor="#9094a9" /><stop offset="1" stopColor="#8f93a8" />
      </linearGradient>
      <linearGradient id="gleam" gradientUnits="userSpaceOnUse" x1="380" y1="620" x2="1040" y2="280">
        <stop offset="0" stopColor="#b4b8d0" stopOpacity="0" /><stop offset=".4" stopColor="#b4b8d0" /><stop offset="1" stopColor="#b0b4cc" stopOpacity=".7" />
      </linearGradient>
      <clipPath id="rimClip"><path d={RIM} /></clipPath>
    </defs>
    <path d="M-200 325L300 300 700 180 1300 90V430L700 400 -200 410z" fill="#d9deeb" filter="url(#haze)" />
    <g transform="translate(297 190) scale(.33333)">
      <path d="M55 830C65 970 150 1018 300 1008C480 995 760 910 920 800C1060 715 1135 600 1128 490L600 600Z" fill="#383838" stroke="#383838" strokeWidth="16" filter="url(#soft)" />
      <path d="M58 560V760C58 860 150 932 250 935C290 936 340 925 420 900C560 860 800 745 960 645C1080 570 1135 500 1135 430V270L700 400Z" fill="url(#side)" stroke="#000" strokeWidth="3.600" />
      <path d="M58 770C80 860 160 902 250 902C400 898 560 840 700 770C830 705 950 640 1050 560C1100 520 1130 480 1135 430C1135 500 1080 570 960 645C800 745 560 860 420 900C340 925 290 936 250 935C150 932 58 860 58 770Z" fill="#686c7d" stroke="#000" strokeWidth="3.200" />
      <path d={RIM} fill="url(#rim)" />
      <g clipPath="url(#rimClip)">
        <path d="M380 640C560 585 800 425 1040 285" fill="none" stroke="url(#gleam)" strokeWidth="34" filter="url(#sheen)" />
        <path d="M60 600C90 690 150 720 250 725C380 722 480 690 600 640" fill="none" stroke="#6f7386" strokeWidth="26" filter="url(#sheen)" />
        <path d="M90 560C85 450 180 310 320 190" fill="none" stroke="#a2a6bd" strokeWidth="14" filter="url(#sheen)" />
      </g>
      <path d={RIM} fill="none" stroke="#000" strokeWidth="3.600" />
      <path d="M116 540C112 420 210 270 330 185C450 105 580 68 730 67C870 68 1075 110 1076 190C1075 250 980 300 880 358C760 425 560 545 420 595C340 625 280 645 220 645C150 640 118 590 116 540Z" fill="url(#top)" stroke="#000" strokeWidth="3.600" />
      <text transform="matrix(.8 .4 -.68 .62 473 264)" fontFamily="Open Sans, sans-serif" fontSize="57" fill="none" stroke="#111" strokeWidth="3">SOAP</text>
      <g stroke="#4d2035" strokeWidth="2" fill="#c96a9c">
        <path d="M592 470V425h-8L597 400l12 25h-8v45zM600 470l38 22 4-8 16 25-28-4 5-7-38-22zM594 470l-38 22-4-7-18 23 28-2-5-8 40-22z" />
        <circle cx="597" cy="474" r="10" fill="#e08ab5" />
      </g>
      <g fill="#ff7cc0" stroke="#ff7cc0" strokeWidth=".8" fontFamily="Liberation Sans, sans-serif" fontSize="35">
        <text x="586" y="399">Iz</text><text x="518" y="529">Ix</text><text x="658" y="527">Iy</text>
      </g>
    </g>
    <g>
      <path d="M39.500 628V609" stroke="#1b5e1b" strokeWidth="4" /><path d="M35 611l4.500-12 4.500 12z" fill="#2c8a2c" stroke="#143f14" strokeWidth=".8" />
      <path d="M39.500 628l14 7" stroke="#b51a1a" strokeWidth="4" /><path d="M62 641l-8-10-3 8z" fill="#e02525" stroke="#5c0e0e" strokeWidth=".8" />
      <path d="M39.500 628l-13 7" stroke="#1a1ab0" strokeWidth="4" /><path d="M18 640l8-9 3 8z" fill="#2a2ae0" stroke="#0d0d5c" strokeWidth=".8" />
      <g fontFamily="Liberation Sans, sans-serif" fontSize="12">
        <text x="35.500" y="603" fill="#1f8c1f">Y</text><text x="59" y="646" fill="#f02020">X</text><text x="12" y="646" fill="#1a1af0">Z</text>
      </g>
    </g>
  </Svg>
);

/* ---------- data ---------- */
const quick: [string, number][] = [
  ['home', 26], ['file', 24], ['v', 14], ['open', 25], ['v', 14], ['save', 25], ['v', 14], ['print', 25], ['v', 14],
  ['undo', 25], ['v', 14], ['cursor', 25], ['v', 14], ['light', 28], ['options', 24], ['gear', 27], ['v', 11],
];
const views: [string, number][] = [
  ['zoomFit', 26], ['zoomArea', 25], ['prevView', 28], ['sectionView', 24], ['orient', 28], ['v', 13], ['shaded', 27], ['v', 13],
  ['eye', 27], ['v', 13], ['appearance', 27], ['scene', 24],
];
const tree: [string, string, 'none' | 'closed' | 'open'][] = [
  ['history', 'History', 'closed'], ['sensors', 'Sensors', 'none'], ['annotations', 'Annotations', 'closed'],
  ['bodies', 'Solid Bodies(1)', 'closed'], ['material', 'Material <not specified>', 'none'], ['plane', 'Front Plane', 'none'],
  ['plane', 'Top Plane', 'none'], ['plane', 'Right Plane', 'none'], ['origin', 'Origin', 'none'], ['sweep', 'Surface-Sweep4', 'closed'],
  ['extrude', 'Surface-Extrude5', 'closed'], ['extrude', 'Surface-Extrude6', 'closed'], ['trim', 'Surface-Trim1', 'none'],
  ['trim', 'Surface-Trim2', 'none'], ['trim', 'Surface-Trim6', 'none'], ['trim', 'Surface-Trim7', 'none'], ['knit', 'Surface-Knit1', 'none'],
  ['fillet', 'Fillet1', 'none'], ['fillet', 'Fillet2', 'none'], ['plane', 'Plane1', 'none'], ['wrap', 'Wrap1', 'open'],
];
type ReportLine = { i?: number; w?: number; c: string[] };
const report: ReportLine[] = [
  { c: ['Mass properties of Lab 9 Kyle Soap'] }, { i: 15, c: ['Configuration: Default'] }, { i: 15, c: ['Coordinate system: -- default --'] }, { c: [] },
  { c: ['Density = 0.04 pounds per cubic inch'] }, { c: [] }, { c: ['Mass = 0.21 pounds'] }, { c: [] }, { c: ['Volume = 5.75 cubic inches'] }, { c: [] },
  { c: ['Surface area = 18.28 square inches'] }, { c: [] }, { c: ['Center of mass: ( inches )'] },
  { i: 20, c: ['X = 0.00'] }, { i: 20, c: ['Y = 0.62'] }, { i: 20, c: ['Z = 1.75'] }, { c: [] },
  { c: ['Principal axes of inertia and principal moments of inertia: ( pounds * square'] }, { c: ['Taken at the center of mass.'] },
  { i: 23, w: 137, c: ['Ix = ( 0.00,  0.00,  1.00)', 'Px = 0.07'] }, { i: 23, w: 137, c: ['Iy = ( 1.00,  0.00,  0.00)', 'Py = 0.17'] },
  { i: 23, w: 137, c: ['Iz = ( 0.00,  1.00,  0.00)', 'Pz = 0.20'] }, { c: [] },
  { c: ['Moments of inertia: ( pounds * square inches )'] }, { c: ['Taken at the center of mass and aligned with the output coordinate system.'] },
  { i: 20, c: ['Lxx = 0.17', 'Lxy = 0.00', 'Lxz = 0.00'] }, { i: 20, c: ['Lyx = 0.00', 'Lyy = 0.20', 'Lyz = 0.00'] }, { i: 20, c: ['Lzx = 0.00', 'Lzy = 0.00', 'Lzz = 0.07'] }, { c: [] },
  { c: ['Moments of inertia: ( pounds * square inches )'] }, { c: ['Taken at the output coordinate system.'] },
  { i: 20, c: ['Ixx = 0.89', 'Ixy = 0.00', 'Ixz = 0.00'] }, { i: 20, c: ['Iyx = 0.00', 'Iyy = 0.83', 'Iyz = 0.23'] }, { i: 20, c: ['Izx = 0.00', 'Izy = 0.23', 'Izz = 0.15'] },
];

const Slots = ({ items, caret }: { items: [string, number][]; caret?: string }) => (
  <>{items.map(([n, w], i) => <Slot key={i} $w={w}>{n === 'v' ? <Caret $c={caret} /> : <Icon name={n} />}</Slot>)}</>
);
const Commands = ({ w, ml, items }: { w: number; ml: number; items: [string, string][] }) => (
  <CommandList $w={w} $ml={ml}>
    {items.map(([n, t]) => <Command key={n} $off={n === 'importDiag'}><Icon name={n} />{t}</Command>)}
  </CommandList>
);

export default function App() {
  return (
    <>
      <GlobalStyle />
      <Window>
        <TitleBar>
          <LogoBox>
            <Svg width="29" height="30" viewBox="0 0 29 30">
              <g fill="none" stroke="#da291c" strokeLinecap="round" strokeLinejoin="round">
                <path d="M4 3C9 0 19-1 18 2.500C17 5 12 7 9 8" strokeWidth="2" />
                <path d="M9 8C17 9 18 14 13 18C9 22 5 24 1 25L8 13" strokeWidth="2.200" />
                <path d="M27 9C20 7.500 13 10 17 14C20 17 26 17 24 21C22 25 16 25 12 24.500" strokeWidth="2.600" />
              </g>
            </Svg>
            <LogoText>SOLID<b>WORKS</b></LogoText>
          </LogoBox>
          <LogoArrow />
          <Quick><Slots items={quick} /></Quick>
          <DocTitle>Lab 9 Kyle Soap *</DocTitle>
          <SearchBox><Icon name="prompt" size={18} /><span>Search Commands</span><Grow /><Icon name="search" size={18} /><Slot $w={16}><Caret /></Slot></SearchBox>
          <SysButtons>
            <Icon name="user" size={20} />
            <strong>?</strong>
            <Slot $w={14}><Caret /></Slot>
            <Svg width="66" height="20" viewBox="0 0 66 20">
              <path d="M8 13.500h10" stroke="#333" strokeWidth="3" />
              <path d="M32.500 8.500h8v6h-8zM36 8V5.500h8.500V12H41" fill="none" stroke="#333" strokeWidth="1.300" />
              <path d="M60 5l10 10M70 5L60 15" stroke="#333" strokeWidth="1.600" />
            </Svg>
          </SysButtons>
        </TitleBar>

        <Ribbon>
          <BigButton $w={49} $ml={4} $pad={4} $gap={1}><Icon name="bolts" />{'Design\nStudy'}<Slot $w={10} $top={14}><Caret /></Slot></BigButton>
          <Separator />
          <BigButton $w={56} $pad={12}><Icon name="measure" />Measure</BigButton>
          <BigButton $w={60} $pad={12}><Icon name="scale" />{'Mass\nProperties'}</BigButton>
          <BigButton $w={64} $pad={12}><Icon name="section" />{'Section\nProperties'}</BigButton>
          <BigButton $w={43} $pad={12}><Icon name="sensor" />Sensor</BigButton>
          <BigButton $w={76} $pad={12} $gap={13}><Icon name="perf" />{'Performance\nEvaluation'}</BigButton>
          <Commands w={135} ml={1} items={[['check', 'Check'], ['geometry', 'Geometry Analysis'], ['importDiag', 'Import Diagnostics']]} />
          <Separator />
          <Commands w={134} ml={3} items={[['deviation', 'Deviation Analysis'], ['zebra', 'Zebra Stripes'], ['curvature', 'Curvature']]} />
          <Commands w={143} ml={0} items={[['draft', 'Draft Analysis'], ['undercut', 'Undercut Analysis'], ['parting', 'Parting Line Analysis']]} />
          <Commands w={144} ml={0} items={[['symmetry', 'Symmetry Check'], ['thickness', 'Thickness Analysis'], ['compare', 'Compare Documents']]} />
          <Separator />
          <BigButton $w={86} $ml={14} $pad={12} $off><Icon name="exp3d" />3DEXPERIENCE</BigButton>
          <BigButton $w={98} $pad={12}><Icon name="simx" />SimulationXpress</BigButton>
          <BigButton $w={58} $pad={12}><Icon name="flo" />FloXpress</BigButton>
          <BigButton $w={68} $pad={12}><Icon name="dfm" />DFMXpress</BigButton>
          <BigButton $w={102} $pad={12}><Icon name="drive" />DriveWorksXpress</BigButton>
          <More>»</More>
        </Ribbon>

        <TabBar>
          <Tab $w={60}>Features</Tab>
          <Tab $w={56}>Sketch</Tab>
          <Tab $w={63} $active>Evaluate</Tab>
          <Tab $w={66}>DimXpert</Tab>
          <Tab $w={133}>SOLIDWORKS Add-Ins</Tab>
          <ViewTools><Slots items={views} caret="#888" /></ViewTools>
        </TabBar>

        <Main>
          <SidePanel>
            <Grip />
            <PanelTabs>
              <PanelTab $active><Icon name="part" /></PanelTab>
              <PanelTab><Icon name="propTab" /></PanelTab>
              <PanelTab><Icon name="configTab" /></PanelTab>
              <PanelTab><Icon name="target" /></PanelTab>
              <PanelTab><Icon name="ballTab" /></PanelTab>
              <PanelNext><Chevron dir="right" c="#666" /></PanelNext>
            </PanelTabs>
            <FilterBox><Icon name="filter" size={19} /></FilterBox>
            <Tree>
              <TreeRow $indent={2}><Icon name="part" /><Slot $w={4} /><Icon name="grad" /><TreeLabel>Lab 9 Kyle Soap  (Default&lt;&lt;Default&gt;</TreeLabel></TreeRow>
              {tree.map(([icon, label, state], i) => (
                <TreeRow key={i} $indent={0}><Expander $state={state} /><Icon name={icon} /><TreeLabel>{label}</TreeLabel></TreeRow>
              ))}
              <TreeRow $indent={48}><Icon name="sketch" /><TreeLabel>(-) Sketch16</TreeLabel></TreeRow>
            </Tree>
            <Rollback />
            <PanelScroll><Chevron dir="left" /><Slot $w={5} /><Thumb $w={157} /><Grow /><Chevron dir="right" /></PanelScroll>
            <PanelEdge />
          </SidePanel>
          <Viewport>
            <Scene />
            <ViewName>*Isometric</ViewName>
          </Viewport>
          <Dock>
            {['home', 'library', 'folder', 'palette', 'appBall', 'listPane', 'forum'].map((n, i) => (
              <DockTab key={n} $active={i === 0}><Icon name={n} /></DockTab>
            ))}
          </Dock>
          <Splitter />
        </Main>

        <ModelTabs>
          <NavKeys>
            {['M4 2v7M10 2L6 5.500l4 3.500z', 'M8 2L4 5.500 8 9z', 'M4 2l4 3.500L4 9z', 'M8 2v7M2 2l4 3.500L2 9z'].map(d => (
              <NavKey key={d}><Svg width="12" height="11" viewBox="0 0 12 11"><path d={d} fill="#888" stroke="#888" /></Svg></NavKey>
            ))}
          </NavKeys>
          <ModelTab $w={57} $active>Model</ModelTab>
          <ModelTab $w={108}>Motion Study 1</ModelTab>
        </ModelTabs>
        <StatusBar>
          <Grow>SOLIDWORKS Student Edition - Academic Use Only</Grow>
          <StatusCell $w={8} $pl={0} />
          <StatusCell $w={71} $pl={2}>Editing Part</StatusCell>
          <StatusCell $w={16} $pl={0} />
          <StatusCell $w={157} $pl={40}>IPS<Slot $w={62}><Caret $up /></Slot></StatusCell>
          <Icon name="tag" />
        </StatusBar>

        <Dialog>
          <DialogTitle>
            <Icon name="scale" size={18} /><span>Mass Properties</span>
            <Svg width="119" height="12" viewBox="0 0 119 12">
              <path d="M0 6.500h10" stroke="#000" /><path d="M45.500 1.500h9v9h-9z" fill="none" stroke="#ccc" /><path d="M91 1l10 10M101 1L91 11" stroke="#000" strokeWidth="1.100" />
            </Svg>
          </DialogTitle>
          <Row $h={62} $mt={5} $pl={14}>
            <FileIcon><Icon name="part" /></FileIcon>
            <Selection>Lab 9 Kyle Soap.SLDPRT</Selection>
            <Button $w={73} $ml={34}>Options...</Button>
          </Row>
          <Row $h={21} $mt={6} $pl={46}><Button $w={192}>Override Mass Properties...</Button><Button $w={90} $ml={20}>Recalculate</Button></Row>
          <Row $h={22} $mt={5}><Box><Svg width="11" height="11" viewBox="0 0 11 11"><path d="M1.500 5l3 3 5-6" fill="none" stroke="#222" strokeWidth="1.300" /></Svg></Box><Caption>Include hidden bodies/components</Caption></Row>
          <Row $h={22}><Box /><Caption>Create Center of Mass feature</Caption></Row>
          <Row $h={22}><Box /><Caption>Show weld bead mass</Caption></Row>
          <Row $h={21} $mt={1}><Caption $w={191}>Report coordinate values relative to:</Caption><Select><Caption>-- default --</Caption><Chevron dir="down" /></Select></Row>
          <Report>
            <ReportText>
              {report.map((l, i) => (
                <Line key={i} $indent={l.i}>{l.c.map(c => <Cell key={c} $w={l.c.length > 1 ? l.w || 140 : undefined}>{c}</Cell>)}</Line>
              ))}
            </ReportText>
            <ReportScroll><Chevron dir="left" /><Slot $w={5} /><Thumb $w={323} /><Grow /><Chevron dir="right" /></ReportScroll>
          </Report>
          <Row $h={21} $mt={8}><Button $w={88}>Help</Button><Button $w={91} $ml={60}>Print...</Button><Button $w={121} $ml={49}>Copy to Clipboard</Button></Row>
        </Dialog>
      </Window>
    </>
  );
}
